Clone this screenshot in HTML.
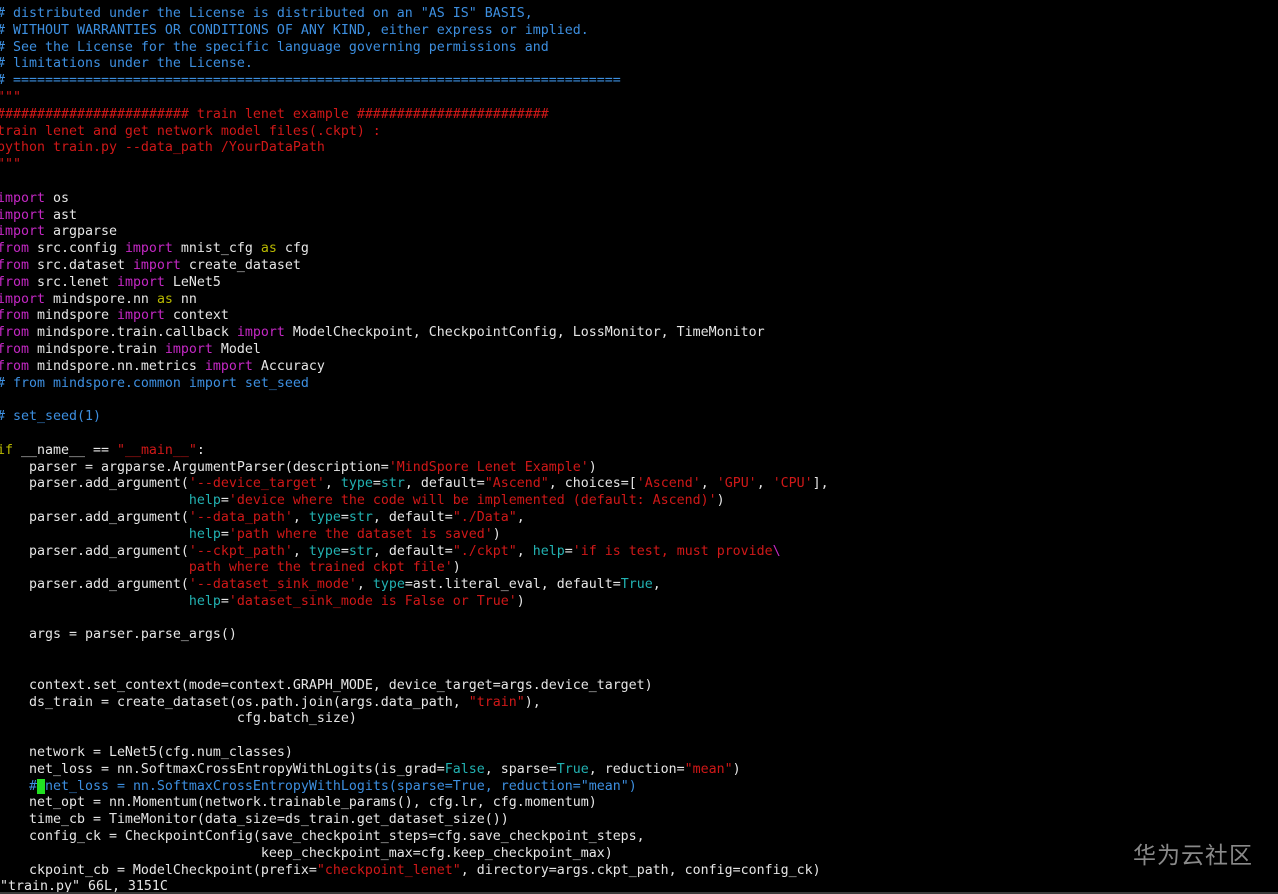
<!DOCTYPE html>
<html><head><meta charset="utf-8"><style>
html,body{margin:0;padding:0;background:#000;width:1278px;height:894px;overflow:hidden;position:relative}
pre{margin:0;position:absolute;left:-3px;top:6px;font-family:"DejaVu Sans Mono","Liberation Mono",monospace;font-size:13.29px;line-height:16.8px;color:#e6e6e6;white-space:pre}
.c{color:#3d8fe0}.r{color:#d01818}.m{color:#c428c4}.y{color:#b9b900}.t{color:#22b2b2}
.cur{background:#22e022;color:#000}
.wm{position:absolute;left:1133px;top:836px;font-family:"Noto Sans CJK SC",sans-serif;font-size:23px;color:#8a8a8a;letter-spacing:1px}
.bl{position:absolute;left:0;top:892px;width:1278px;height:2px;background:#3a3a3a}
</style></head><body>
<pre><span class="c"># distributed under the License is distributed on an "AS IS" BASIS,
# WITHOUT WARRANTIES OR CONDITIONS OF ANY KIND, either express or implied.
# See the License for the specific language governing permissions and
# limitations under the License.
# ============================================================================</span>
<span class="r">"""
######################## train lenet example ########################
train lenet and get network model files(.ckpt) :
python train.py --data_path /YourDataPath
"""</span>

<span class="m">import</span> os
<span class="m">import</span> ast
<span class="m">import</span> argparse
<span class="m">from</span> src.config <span class="m">import</span> mnist_cfg <span class="y">as</span> cfg
<span class="m">from</span> src.dataset <span class="m">import</span> create_dataset
<span class="m">from</span> src.lenet <span class="m">import</span> LeNet5
<span class="m">import</span> mindspore.nn <span class="y">as</span> nn
<span class="m">from</span> mindspore <span class="m">import</span> context
<span class="m">from</span> mindspore.train.callback <span class="m">import</span> ModelCheckpoint, CheckpointConfig, LossMonitor, TimeMonitor
<span class="m">from</span> mindspore.train <span class="m">import</span> Model
<span class="m">from</span> mindspore.nn.metrics <span class="m">import</span> Accuracy
<span class="c"># from mindspore.common import set_seed</span>

<span class="c"># set_seed(1)</span>

<span class="y">if</span> __name__ == <span class="r">"__main__"</span>:
    parser = argparse.ArgumentParser(description=<span class="r">'MindSpore Lenet Example'</span>)
    parser.add_argument(<span class="r">'--device_target'</span>, <span class="t">type</span>=<span class="t">str</span>, default=<span class="r">"Ascend"</span>, choices=[<span class="r">'Ascend'</span>, <span class="r">'GPU'</span>, <span class="r">'CPU'</span>],
                        <span class="t">help</span>=<span class="r">'device where the code will be implemented (default: Ascend)'</span>)
    parser.add_argument(<span class="r">'--data_path'</span>, <span class="t">type</span>=<span class="t">str</span>, default=<span class="r">"./Data"</span>,
                        <span class="t">help</span>=<span class="r">'path where the dataset is saved'</span>)
    parser.add_argument(<span class="r">'--ckpt_path'</span>, <span class="t">type</span>=<span class="t">str</span>, default=<span class="r">"./ckpt"</span>, <span class="t">help</span>=<span class="r">'if is test, must provide</span><span class="m">\</span>
<span class="r">                        path where the trained ckpt file'</span>)
    parser.add_argument(<span class="r">'--dataset_sink_mode'</span>, <span class="t">type</span>=ast.literal_eval, default=<span class="t">True</span>,
                        <span class="t">help</span>=<span class="r">'dataset_sink_mode is False or True'</span>)

    args = parser.parse_args()


    context.set_context(mode=context.GRAPH_MODE, device_target=args.device_target)
    ds_train = create_dataset(os.path.join(args.data_path, <span class="r">"train"</span>),
                              cfg.batch_size)

    network = LeNet5(cfg.num_classes)
    net_loss = nn.SoftmaxCrossEntropyWithLogits(is_grad=<span class="t">False</span>, sparse=<span class="t">True</span>, reduction=<span class="r">"mean"</span>)
    <span class="c">#</span><span class="cur"> </span><span class="c">net_loss = nn.SoftmaxCrossEntropyWithLogits(sparse=True, reduction="mean")</span>
    net_opt = nn.Momentum(network.trainable_params(), cfg.lr, cfg.momentum)
    time_cb = TimeMonitor(data_size=ds_train.get_dataset_size())
    config_ck = CheckpointConfig(save_checkpoint_steps=cfg.save_checkpoint_steps,
                                 keep_checkpoint_max=cfg.keep_checkpoint_max)
    ckpoint_cb = ModelCheckpoint(prefix=<span class="r">"checkpoint_lenet"</span>, directory=args.ckpt_path, config=config_ck)
<span style="position:relative;left:3px">"train.py" 66L, 3151C</span></pre>
<div class="wm">华为云社区</div>
<div class="bl"></div>
</body></html>
